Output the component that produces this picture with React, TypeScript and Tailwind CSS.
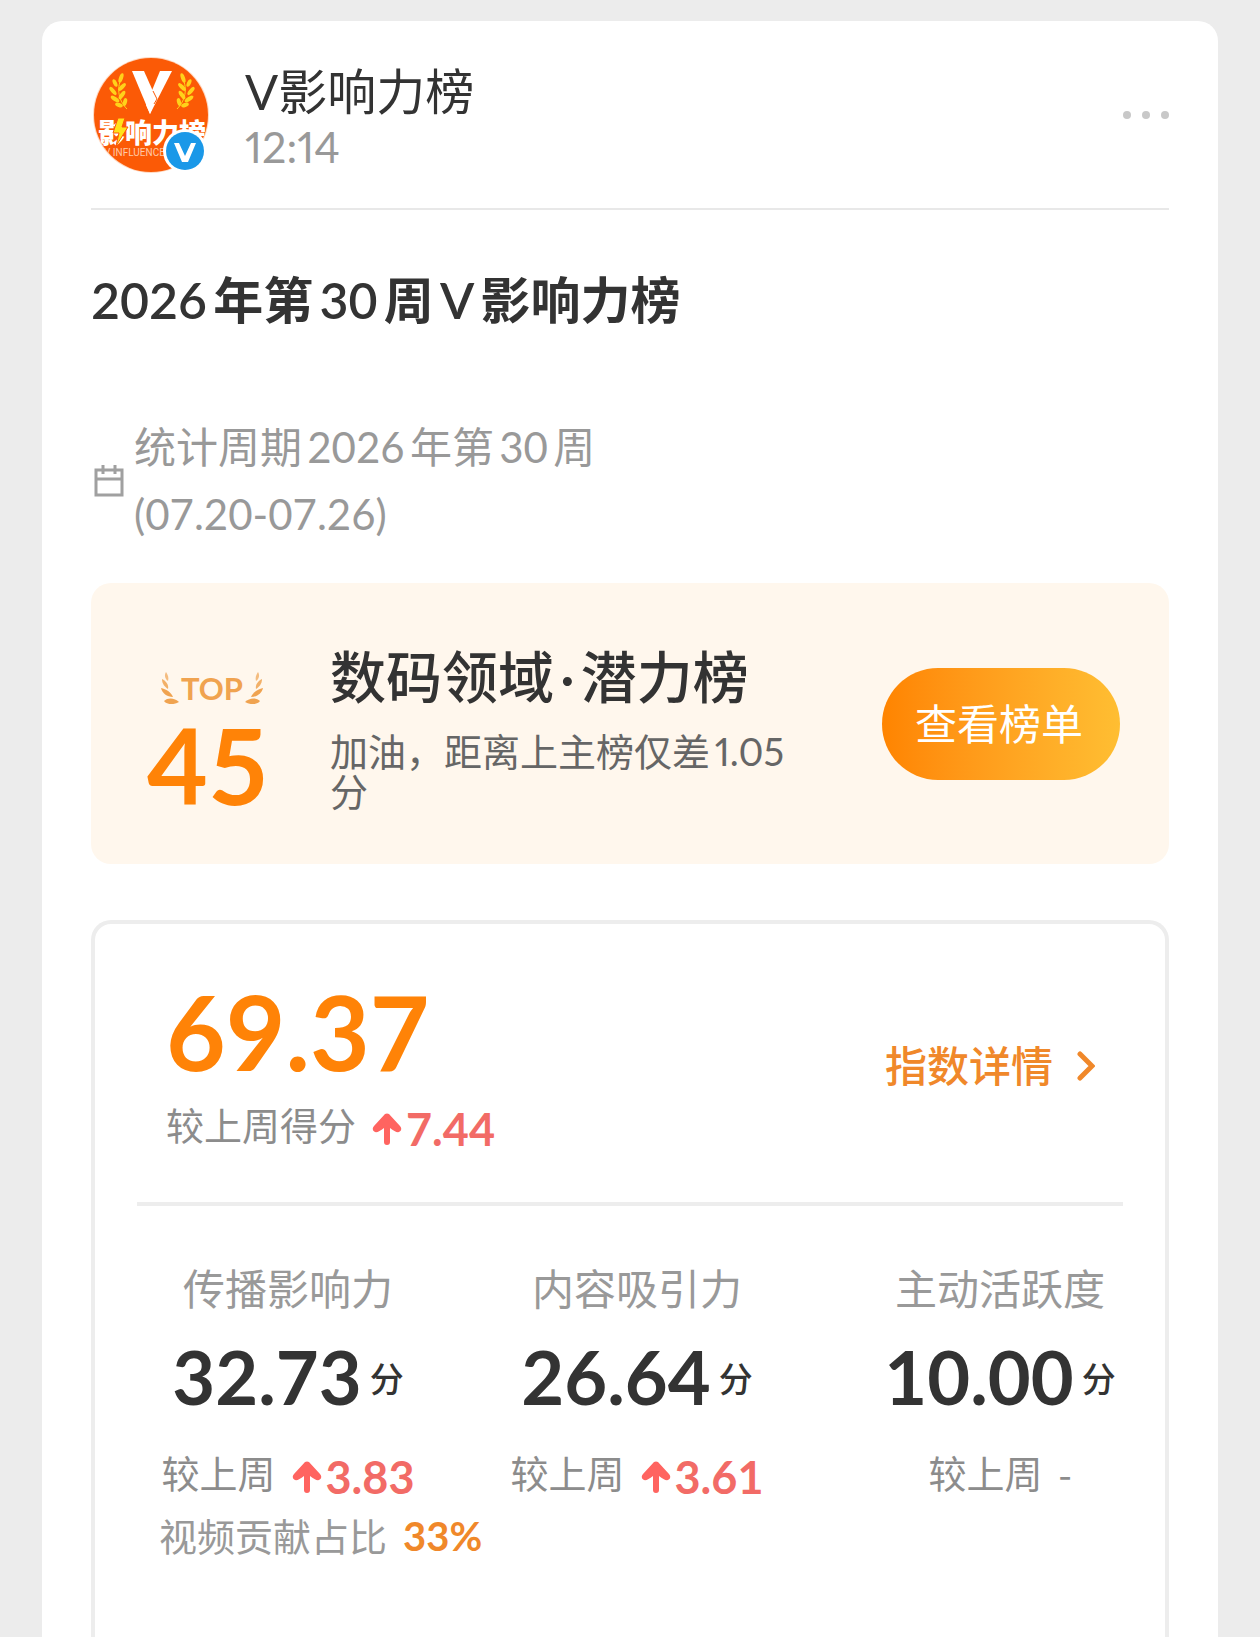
import type { ReactNode } from 'react';

const metrics = [
  { label: '传播影响力', value: '32.73', change: '3.83', videoShare: '33%' },
  { label: '内容吸引力', value: '26.64', change: '3.61' },
  { label: '主动活跃度', value: '10.00' },
];

function Avatar() {
  return (
    <div className="relative size-[116px] shrink-0">
      <svg viewBox="0 0 116 116" className="size-full" role="img" aria-label="V影响力榜">
        <defs>
          <clipPath id="avatar-clip">
            <circle cx="58" cy="58" r="57" />
          </clipPath>
        </defs>
        <circle cx="58" cy="58" r="58" fill="#ffd9c2" />
        <g clipPath="url(#avatar-clip)">
          <rect width="116" height="116" fill="#fb5a06" />
          <path d="M39 14h12l12 27-6 16z" fill="#fff" />
          <path d="M67 14h12L57 57l-4-9z" fill="#fff" />
          <path d="M60 34l4 8-3 5" fill="none" stroke="#fb5a06" strokeWidth="1" />
          <Wheat />
          <g transform="translate(118 0) scale(-1 1)">
            <Wheat />
          </g>
          <g fontFamily="'Noto Sans CJK SC', sans-serif" fontWeight="900" fontSize="27" fill="#fff">
            <text x="5" y="86">影</text>
            <text x="32" y="86">响</text>
            <text x="59" y="86">力</text>
            <text x="86" y="86">榜</text>
          </g>
          <path
            d="M25 61h7l-3 9h6L23 89l3-13h-6z"
            fill="#ffe21a"
            stroke="#fb5a06"
            strokeWidth="1"
          />
          <text x="11" y="99" fontFamily="Roboto, sans-serif" fontSize="10" fill="#ffc9a8">
            V INFLUENCE
          </text>
        </g>
      </svg>
      <svg viewBox="0 0 44 44" className="absolute right-[2px] bottom-0 size-[44px]" aria-hidden="true">
        <circle cx="22" cy="22" r="22" fill="#fff" />
        <circle cx="22" cy="22" r="19" fill="#1a98e8" />
        <path d="M11 14h5l6 13 6-13h5l-8 19h-6z" fill="#fff" />
      </svg>
    </div>
  );
}

function Wheat() {
  return (
    <g fill="#ffd21a">
      <path d="M29 20C24 29 24 42 34 52" fill="none" stroke="#ffd21a" strokeWidth="1" />
      <ellipse cx="28" cy="21" rx="2" ry="5" transform="rotate(20 28 21)" />
      <ellipse cx="22" cy="26" rx="2" ry="4" transform="rotate(-25 22 26)" />
      <ellipse cx="29" cy="30" rx="2" ry="5" transform="rotate(45 29 30)" />
      <ellipse cx="20" cy="34" rx="2" ry="5" transform="rotate(-40 20 34)" />
      <ellipse cx="29" cy="38" rx="2" ry="5" transform="rotate(35 29 38)" />
      <ellipse cx="22" cy="42" rx="2" ry="5" transform="rotate(-55 22 42)" />
      <ellipse cx="32" cy="45" rx="2" ry="4" transform="rotate(15 32 45)" />
      <ellipse cx="26" cy="48" rx="2" ry="4" transform="rotate(-70 26 48)" />
    </g>
  );
}

function Laurel({ className }: { className?: string }) {
  return (
    <svg viewBox="0 0 18 32" className={className} fill="#f0a350" aria-hidden="true">
      <path d="M5 0c-2 3-1 7 2 9 1-3 0-6-2-9z" opacity=".7" />
      <path d="M1 7c0 5 3 8 6 10 1-4-2-8-6-10z" opacity=".85" />
      <path d="M0 16c1 5 6 9 12 9-2-5-7-8-12-9z" />
      <path d="M3 29c4-4 11-3 15 1-5 3-12 3-15-1z" />
    </svg>
  );
}

function CalendarIcon() {
  return (
    <svg viewBox="0 0 30 32" className="h-8 w-[30px] shrink-0" fill="none" stroke="#a0a0a0" strokeWidth="3" aria-hidden="true">
      <path d="M2 5h26v25H2zM2 14h26M9 0v9M21 0v9" />
    </svg>
  );
}

function UpArrow() {
  return (
    <svg viewBox="0 0 30 32" className="h-8 w-[30px] shrink-0" fill="#ff6460" role="img" aria-label="上升">
      <path d="M13 1Q15 0 17 1L28 13Q31 17 27 19Q24 20 18 15V29Q18 32 15 32Q12 32 12 29V15Q6 20 3 19Q-1 17 2 13z" />
    </svg>
  );
}

function Change({ label, children }: { label: string; children: ReactNode }) {
  return (
    <div className="flex min-h-[52px] items-center gap-4 text-[38px] leading-[44px] whitespace-nowrap text-[#8c8c8c]">
      <span>{label}</span>
      {children}
    </div>
  );
}

function Rise({ value }: { value: string }) {
  return (
    <span className="flex items-center gap-1 pt-2 text-[45px] leading-[44px] font-bold text-[#f26b66]">
      <UpArrow />
      {value}
    </span>
  );
}

export default function App() {
  return (
    <div className="flex min-h-screen flex-col bg-[#ececec] px-[42px] pt-[21px] font-[Lato,'Noto_Sans_CJK_SC',sans-serif] text-[#333]">
      <main className="flex flex-1 flex-col rounded-t-[20px] bg-white px-[49px] pt-9">
        {/* Account header */}
        <header className="flex items-center border-b-2 border-[#e8e8e8] pb-[35px] pl-[2px]">
          <Avatar />
          <div className="ml-9 flex-1 pt-1">
            <h2 className="text-[49px] leading-[60px] [text-autospace:no-autospace]">V影响力榜</h2>
            <time className="block text-[43px] leading-[52px] text-[#999] proportional-nums">12:14</time>
          </div>
          <button type="button" aria-label="更多" className="flex gap-[11px]">
            <span className="size-2 rounded-full bg-[#c8c8c8]" />
            <span className="size-2 rounded-full bg-[#c8c8c8]" />
            <span className="size-2 rounded-full bg-[#c8c8c8]" />
          </button>
        </header>

        <h1 className="mt-[60px] text-[50px] leading-[60px] font-semibold [text-autospace:normal]">2026年第30周V影响力榜</h1>

        <div className="mt-[84px] flex items-center gap-[10px] pl-[3px]">
          <CalendarIcon />
          <p className="text-[42px] leading-[67px] text-[#999] [text-autospace:normal]">
            统计周期2026年第30周
            <br />
            (07.20-07.26)
          </p>
        </div>

        {/* Ranking banner */}
        <section className="mt-[35px] flex h-[281px] items-center rounded-[20px] bg-[#fff7ed] pr-[49px] pl-[52px]">
          <div className="w-[130px] shrink-0 pt-11 text-center">
            <div className="flex items-center justify-center gap-[2px] pl-2">
              <Laurel className="h-8 w-[18px]" />
              <span className="text-[31px] leading-9 font-bold text-[#f0a350]">TOP</span>
              <Laurel className="h-8 w-[18px] -scale-x-100" />
            </div>
            <div className="text-[105px] leading-[116px] font-bold text-[#ff8307]">45</div>
          </div>
          <div className="ml-[57px] flex-1 pt-1">
            <h2 className="text-[56px] leading-[72px] font-medium">
              数码领域<span className="mx-[6px]">·</span>潜力榜
            </h2>
            <p className="mt-[18px] text-[38px] leading-10 text-[#666] proportional-nums [text-autospace:normal]">
              加油，距离上主榜仅差1.05
              <br />分
            </p>
          </div>
          <button
            type="button"
            className="h-[112px] w-[238px] shrink-0 rounded-full bg-linear-to-r from-[#ff8400] to-[#ffbe32] pt-[2px] pr-1 text-[42px] text-white"
          >
            查看榜单
          </button>
        </section>

        {/* Score card */}
        <section className="mt-14 flex-1 rounded-t-[20px] border-4 border-b-0 border-[#ededed]">
          <div className="mx-[42px] flex items-center justify-between border-b-4 border-[#ededed] pt-14 pr-7 pb-[51px] pl-[29px]">
            <div>
              <div className="text-[103px] leading-[102px] font-bold text-[#ff8307]">69.37</div>
              <div className="mt-[17px]">
                <Change label="较上周得分">
                  <Rise value="7.44" />
                </Change>
              </div>
            </div>
            <a href="#detail" className="flex items-center gap-6 text-[42px] leading-[60px] font-medium text-[#f0882a]">
              指数详情
              <svg viewBox="0 0 18 30" className="h-[30px] w-[18px]" fill="none" stroke="#f0882a" strokeWidth="5" strokeLinecap="round" aria-hidden="true">
                <path d="M3 3l12 12L3 27" />
              </svg>
            </a>
          </div>

          <div className="grid grid-cols-[302fr_396fr_330fr] pt-[53px] pl-[42px]">
            {metrics.map((metric) => (
              <div key={metric.label} className="flex min-w-0 flex-col items-center whitespace-nowrap">
                <h3 className="text-[42px] leading-[60px] text-[#999]">{metric.label}</h3>
                <div className="mt-[14px] flex items-center gap-2">
                  <span className="text-[74px] leading-[88px] font-bold">{metric.value}</span>
                  <span className="pt-1 text-[34px] leading-[44px] font-medium">分</span>
                </div>
                <div className="mt-[26px]">
                  <Change label="较上周">
                    {metric.change ? (
                      <Rise value={metric.change} />
                    ) : (
                      <span className="font-['Noto_Sans_CJK_SC',sans-serif]">-</span>
                    )}
                  </Change>
                </div>
                {metric.videoShare && (
                  <p className="mt-[11px] flex gap-4 self-start pl-[22px] text-[38px] leading-[52px] text-[#999]">
                    视频贡献占比
                    <strong className="text-[40px] text-[#f0882a]">{metric.videoShare}</strong>
                  </p>
                )}
              </div>
            ))}
          </div>
        </section>
      </main>
    </div>
  );
}
